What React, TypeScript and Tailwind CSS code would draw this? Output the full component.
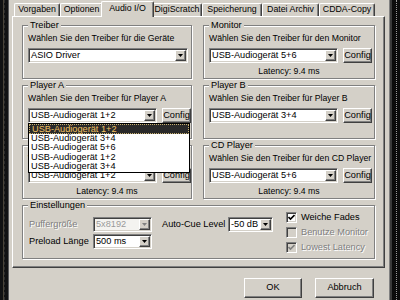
import React from "react"

const SUNKEN =
  "border border-t-[#808080] border-l-[#808080] border-r-white border-b-white shadow-[inset_1px_1px_0_#404040,inset_-1px_-1px_0_#d4d0c8]"
const RAISED =
  "border border-t-white border-l-white border-r-[#404040] border-b-[#404040] shadow-[inset_-1px_-1px_0_#808080,inset_1px_1px_0_#d4d0c8]"
const ETCHED = "border border-[#808080] shadow-[inset_1px_1px_0_#fff,1px_1px_0_#fff]"
const GREYED = "text-[#808080] [text-shadow:1px_1px_0_#fff]"

function Arrow({ disabled }: { disabled?: boolean }) {
  return (
    <div className={`flex h-full w-[11px] shrink-0 items-center justify-center bg-[#d4d0c8] ${RAISED}`}>
      <svg width="5" height="3" viewBox="0 0 5 3">
        <path d="M0 0h5L2.5 3z" fill={disabled ? "#808080" : "#000"} />
      </svg>
    </div>
  )
}

function Combo({ value, className, disabled }: { value: string; className: string; disabled?: boolean }) {
  return (
    <div className={`flex h-[15px] shrink-0 p-[1px] ${SUNKEN} ${disabled ? "bg-[#f4f3f0]" : "bg-white"} ${className}`}>
      <span
        className={`min-w-0 flex-1 overflow-hidden whitespace-nowrap pl-[1px] text-[9.2px] leading-[11px] ${
          disabled ? "text-[#9a9a9a]" : ""
        }`}
      >
        {value}
      </span>
      <Arrow disabled={disabled} />
    </div>
  )
}

function Btn({ label, className }: { label: string; className: string }) {
  return (
    <div className={`flex shrink-0 items-center justify-center bg-[#d4d0c8] text-[9.2px] ${RAISED} ${className}`}>
      {label}
    </div>
  )
}

function Check({ label, checked, disabled }: { label: string; checked?: boolean; disabled?: boolean }) {
  return (
    <div className="flex h-[15px] items-center">
      <div
        className={`flex h-[11px] w-[11px] items-center justify-center ${SUNKEN} ${disabled ? "bg-[#d4d0c8]" : "bg-white"}`}
      >
        {checked && (
          <svg width="7" height="7" viewBox="0 0 7 7">
            <polyline points="0.5,3 2.5,5 6.5,1" fill="none" stroke={disabled ? "#808080" : "#000"} strokeWidth="1.6" />
          </svg>
        )}
      </div>
      <span className={`ml-[4px] whitespace-nowrap text-[9.2px] ${disabled ? GREYED : ""}`}>{label}</span>
    </div>
  )
}

function Group({ title, className, children }: { title: string; className: string; children: React.ReactNode }) {
  return (
    <div className={`flex h-[54px] flex-col ${ETCHED} ${className}`}>
      <span className="-mt-[6px] ml-[5px] self-start bg-[#d4d0c8] px-[2px] text-[9.2px] leading-[10px]">{title}</span>
      {children}
    </div>
  )
}

function DriverGroup({
  title,
  text,
  value,
  latency,
  className,
  list,
}: {
  title: string
  text: string
  value: string
  latency?: boolean
  className: string
  list?: boolean
}) {
  return (
    <Group title={title} className={className}>
      <div className="mt-[3px] whitespace-nowrap pl-[5px] leading-[10px]">{text}</div>
      <div className="mt-[5px] flex gap-[5px] pl-[5px]">
        <div className="relative w-[129px] shrink-0">
          <Combo value={value} className="w-full" />
          {list && <DropList />}
        </div>
        <Btn label="Config" className="h-[15px] w-[29px]" />
      </div>
      {latency && <div className="mt-[3px] text-center leading-[10px]">Latency: 9.4 ms</div>}
    </Group>
  )
}

const ITEMS = ["USB-Audiogerät 1+2", "USB-Audiogerät 3+4", "USB-Audiogerät 5+6", "USB-Audiogerät 1+2", "USB-Audiogerät 3+4"]

function DropList() {
  return (
    <div className="absolute left-0 top-full z-20 w-[162px] border border-black bg-white">
      {ITEMS.map((it, i) => (
        <div
          key={i}
          className={`h-[9.5px] whitespace-nowrap pl-[2px] text-[9.2px] leading-[9px] ${
            i === 0 ? "border border-dotted border-[#c8b070] bg-[#2a2a2a] text-[#f0c060]" : ""
          }`}
        >
          {it}
        </div>
      ))}
    </div>
  )
}

const TABS = [
  { label: "Vorgaben", w: "w-[46px]" },
  { label: "Optionen", w: "w-[43px]" },
  { label: "Audio I/O", w: "w-[49px]", active: true },
  { label: "DigiScratch", w: "w-[50px]" },
  { label: "Speicherung", w: "w-[60px]" },
  { label: "Datei Archiv", w: "w-[57px]" },
  { label: "CDDA-Copy", w: "w-[56px]" },
]

export default function App() {
  return (
    <div className="flex h-[300px] w-[400px] overflow-hidden bg-[#d4d0c8] font-['Liberation_Sans',Arial,sans-serif] text-[8.7px] text-black">
      {/* left edge of the desktop */}
      <div className="flex w-[9px] shrink-0 bg-[#121212]">
        <div className="w-[3px]" />
        <div className="w-[1px] bg-[#4a4438]" />
        <div className="w-[4px] border-l border-dashed border-[#2e2e2e]" />
        <div className="w-[1px] bg-[#5a5a5a]" />
      </div>

      <div className="flex w-[380px] shrink-0 flex-col pl-[3px] pt-[1px]">
        {/* tabs */}
        <div className="flex h-[15px] items-end pl-[2px]">
          {TABS.map((t) =>
            t.active ? (
              <div
                key={t.label}
                className="relative z-10 -mx-[2px] -mb-[1px] h-[16px] w-[53px] shrink-0 whitespace-nowrap rounded-t-[2px] border-l border-r border-t border-l-white border-r-[#404040] border-t-white bg-[#d4d0c8] pt-[1px] text-center text-[8.8px] leading-[11px] shadow-[inset_-1px_0_0_#808080]"
              >
                {t.label}
              </div>
            ) : (
              <div
                key={t.label}
                className={`h-[13px] ${t.w} shrink-0 whitespace-nowrap rounded-t-[2px] border-l border-r border-t border-l-white border-r-[#404040] border-t-white text-center text-[8.8px] leading-[11px] shadow-[inset_-1px_0_0_#808080]`}
              >
                {t.label}
              </div>
            )
          )}
        </div>

        {/* panel */}
        <div className={`h-[252px] w-[373px] pl-[9px] pt-[8px] ${RAISED}`}>
          <div className="grid grid-cols-[170px_172px] gap-x-[11px]">
            <div className="flex flex-col gap-[6px]">
              <Group title="Treiber" className="w-[170px]">
                <div className="mt-[3px] whitespace-nowrap pl-[5px] leading-[10px]">
                  Wählen Sie den Treiber für die Geräte
                </div>
                <div className="mt-[5px] pl-[5px]">
                  <Combo value="ASIO Driver" className="w-[160px]" />
                </div>
              </Group>
              <DriverGroup
                title="Player A"
                text="Wählen Sie den Treiber für Player A"
                value="USB-Audiogerät 1+2"
                className="relative z-20 w-[170px]"
                list
              />
              <DriverGroup
                title="Sampler"
                text="Wählen Sie den Treiber für den Sampler"
                value="USB-Audiogerät 1+2"
                className="w-[170px]"
                latency
              />
            </div>
            <div className="flex flex-col gap-[6px]">
              <DriverGroup
                title="Monitor"
                text="Wählen Sie den Treiber für den Monitor"
                value="USB-Audiogerät 5+6"
                className="w-[172px]"
                latency
              />
              <DriverGroup
                title="Player B"
                text="Wählen Sie den Treiber für Player B"
                value="USB-Audiogerät 3+4"
                className="w-[172px]"
              />
              <DriverGroup
                title="CD Player"
                text="Wählen Sie den Treiber für den CD Player"
                value="USB-Audiogerät 5+6"
                className="w-[172px]"
                latency
              />
            </div>
          </div>

          <Group title="Einstellungen" className="mt-[6px] w-[353px]">
            <div className="flex pl-[6px] text-[9.2px]">
              <div className="mt-[7px] grid grid-cols-[64px_59px] items-center gap-y-[2px] self-start">
                <span className={GREYED}>Puffergröße</span>
                <Combo value="5x8192" className="w-[59px]" disabled />
                <span className="whitespace-nowrap">Preload Länge</span>
                <Combo value="500 ms" className="w-[59px]" />
              </div>
              <div className="ml-[10px] mt-[7px] flex h-[15px] items-center self-start">
                <span className="w-[66px] whitespace-nowrap">Auto-Cue Level</span>
                <Combo value="-50 dB" className="w-[45px]" />
              </div>
              <div className="ml-[13px] flex flex-col">
                <Check label="Weiche Fades" checked />
                <Check label="Benutze Monitor" disabled />
                <Check label="Lowest Latency" checked disabled />
              </div>
            </div>
          </Group>
        </div>

        {/* dialog buttons */}
        <div className="mt-[10px] flex w-[373px] justify-end gap-[13px] pr-[11px]">
          <Btn label="OK" className="h-[20px] w-[58px]" />
          <Btn label="Abbruch" className="h-[20px] w-[59px]" />
        </div>
      </div>

      {/* right edge */}
      <div className="flex flex-1">
        <div className="w-[1px] bg-[#808080]" />
        <div className="w-[2px] bg-[#3a3a3a]" />
        <div className="flex flex-1 justify-center bg-[#0c0c0c]">
          <div className="w-[1px] border-l border-dotted border-[#9a9a9a]" />
        </div>
      </div>
    </div>
  )
}
